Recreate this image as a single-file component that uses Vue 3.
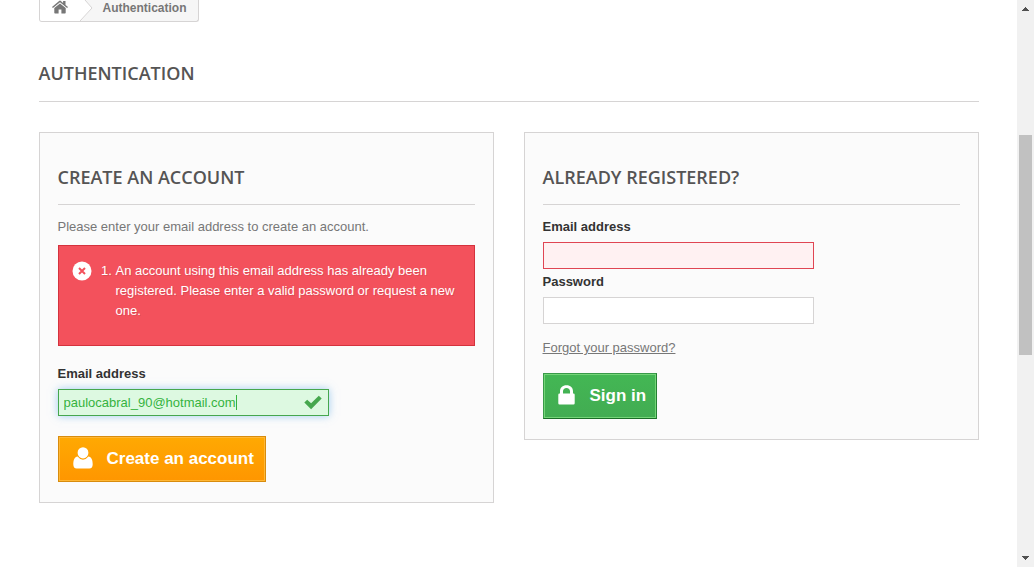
<script setup>
import { ref } from 'vue'

const newEmail = ref('paulocabral_90@hotmail.com')
const loginEmail = ref('')
const password = ref('')
const errors = [
  'An account using this email address has already been registered. Please enter a valid password or request a new one.',
]
const scroll = { start: 118, size: 220, track: 533 }
const thumbStyle = {
  top: `${(scroll.start / scroll.track) * 100}%`,
  height: `${(scroll.size / scroll.track) * 100}%`,
}
</script>

<template>
  <div class="viewport">
    <div class="page">
      <div class="container">
        <nav class="breadcrumb" aria-label="Breadcrumb">
          <a class="home" href="#" aria-label="Home">
            <svg width="16" height="14" viewBox="0 0 16 14">
              <path d="M8 3.4 2.300 8V12.700Q2.300 13.400 3 13.400H6.600V9.600H9.400V13.400H13Q13.700 13.400 13.700 12.700V8Z" />
              <path d="M0 7 7.100 .9Q8 .3 8.900 .9L11.100 2.900V1.100H13.500V5L16 7 15.100 8.100 8 2.300 .9 8.100Z" />
            </svg>
          </a>
          <svg class="divider" width="13" height="22" viewBox="0 0 13 22">
            <path class="fill" d="M0 0V22L12 8 5 0Z" />
            <path class="line" d="M5 0 12 8 0 21" />
          </svg>
          <span class="current">Authentication</span>
        </nav>

        <h1>Authentication</h1>

        <main class="columns">
          <form class="box" @submit.prevent>
            <h2>Create an account</h2>
            <p class="intro">Please enter your email address to create an account.</p>
            <div class="alert" role="alert">
              <svg width="20" height="20" viewBox="0 0 20 20">
                <circle cx="10" cy="10" r="9.500" fill="#fff" />
                <path d="m7 7 6 6m0-6-6 6" stroke="#f3515c" stroke-width="2" />
              </svg>
              <ol>
                <li v-for="error in errors" :key="error">{{ error }}</li>
              </ol>
            </div>
            <div class="field">
              <label for="email-create">Email address</label>
              <div class="control">
                <input id="email-create" v-model="newEmail" class="valid" type="text" />
                <span class="caret"></span>
                <svg class="check" width="18" height="15" viewBox="0 0 18 15">
                  <path d="M.3 7.600 3.200 4.700 7.100 8.300 14.800 .7 17.700 3.600 7.100 14.200Z" />
                </svg>
              </div>
            </div>
            <button class="create" type="submit">
              <svg width="20" height="22" viewBox="0 0 20 22">
                <ellipse cx="10" cy="5.800" rx="5.400" ry="5.600" />
                <path d="M4.600 9.500Q7 12.700 10 12.700T15.400 9.500C18.500 9.800 19.700 13 19.700 17.300Q19.700 21.500 16.300 21.500H3.700Q.3 21.500.3 17.300C.3 13 1.500 9.800 4.600 9.500Z" />
              </svg>
              <span>Create an account</span>
            </button>
          </form>

          <form class="box" @submit.prevent>
            <h2>Already registered?</h2>
            <div class="field">
              <label for="email">Email address</label>
              <div class="control">
                <input id="email" v-model="loginEmail" class="invalid" type="text" />
              </div>
            </div>
            <div class="field">
              <label for="password">Password</label>
              <div class="control">
                <input id="password" v-model="password" type="password" />
              </div>
            </div>
            <p class="forgot"><a href="#">Forgot your password?</a></p>
            <button class="signin" type="submit">
              <svg width="17" height="20" viewBox="0 0 17 20">
                <path fill-rule="evenodd" d="M2 8.500V6.300C2 2.700 4.500.3 8.500.3S15 2.700 15 6.300V8.500H15.500Q16.700 8.500 16.700 9.700V18.200Q16.700 19.400 15.500 19.400H1.500Q.3 19.400.3 18.200V9.700Q.3 8.500 1.500 8.500ZM5 8.500H12V6.300C12 4.300 10.600 3 8.500 3S5 4.300 5 6.300Z" />
              </svg>
              <span>Sign in</span>
            </button>
          </form>
        </main>
      </div>
    </div>

    <div class="scrollbar" aria-hidden="true">
      <svg class="arrow" width="17" height="17" viewBox="0 0 17 17" shape-rendering="crispEdges">
        <path d="M5 11V10H6V9H7V8H8V7H9V8H10V9H11V10H12V11Z" />
      </svg>
      <div class="track"><div class="thumb" :style="thumbStyle"></div></div>
      <svg class="arrow" width="17" height="17" viewBox="0 0 17 17" shape-rendering="crispEdges">
        <path d="M5 6V7H6V8H7V9H8V10H9V9H10V8H11V7H12V6Z" />
      </svg>
    </div>
  </div>
</template>

<style>
body {
  margin: 0;
  background: #fff;
}
</style>

<style scoped>
* {
  box-sizing: border-box;
}
.viewport {
  display: flex;
  min-height: 100vh;
  font: 13px/20px "Liberation Sans", Arial, sans-serif;
  color: #777;
}
.page {
  flex: 1;
  min-width: 0;
  padding: 0 15px;
}
.container {
  max-width: 940px;
  margin: 0 auto;
}
.breadcrumb {
  display: inline-flex;
  height: 22px;
  border: 1px solid #d6d4d4;
  border-top: 0;
  border-radius: 0 0 3px 3px;
  background: #f6f6f6;
  overflow: hidden;
  font-size: 12px;
  font-weight: bold;
  line-height: 16px;
  vertical-align: top;
}
.home {
  width: 40px;
  padding-left: 12px;
  background: #fff;
  fill: #777;
}
.home svg {
  display: block;
}
.divider .fill {
  fill: #fff;
}
.divider .line {
  fill: none;
  stroke: #d6d4d4;
}
.current {
  padding: 0 11px 0 10px;
}
h1,
h2 {
  margin: 0;
  border-bottom: 1px solid #d6d4d4;
  color: #555454;
  font: 600 18px/22px "Open Sans", sans-serif;
  text-transform: uppercase;
}
h1 {
  margin: 40px 0 30px;
  padding-bottom: 17px;
}
h2 {
  margin-bottom: 12px;
  padding-bottom: 16px;
}
.columns {
  display: grid;
  grid-template-columns: 1fr 1fr;
  align-items: start;
  gap: 30px;
}
.box {
  padding: 33px 18px 20px;
  border: 1px solid #d6d4d4;
  background: #fbfbfb;
}
.intro {
  margin: 0 0 8px;
}
.alert {
  display: flex;
  gap: 10px;
  margin-bottom: 18px;
  padding: 15px 14px 24px 13px;
  border: 1px solid #d4323d;
  background: #f3515c;
  color: #fff;
  text-shadow: 1px 1px rgba(0, 0, 0, 0.1);
}
.alert svg {
  flex: none;
}
.alert ol {
  margin: 0;
  padding-left: 14px;
}
.field {
  margin-bottom: 3px;
}
label {
  display: block;
  margin-bottom: 5px;
  color: #333;
  font-weight: bold;
}
.control {
  position: relative;
  max-width: 271px;
}
input {
  display: block;
  width: 100%;
  height: 27px;
  padding: 3px 5px;
  border: 1px solid #d6d4d4;
  border-radius: 0;
  outline: 0;
  background: #fff;
  color: #9c9b9b;
  font: inherit;
}
.valid {
  border-color: #46a74e;
  background: #ddf9e1;
  box-shadow: 0 0 8px rgba(102, 175, 233, 0.6);
  color: #35b33f;
}
.invalid {
  border-color: #e04553;
  background: #fff1f2;
}
.caret {
  position: absolute;
  top: 6px;
  left: 178px;
  width: 1px;
  height: 15px;
  background: #35b33f;
}
.check {
  position: absolute;
  top: 6px;
  right: 7px;
  fill: #46a74e;
}
.forgot {
  margin: 14px 0 15px;
}
.forgot a {
  color: #777;
}
button {
  display: flex;
  align-items: center;
  height: 46px;
  border: 1px solid;
  border-radius: 0;
  color: #fff;
  font: bold 17px/21px "Liberation Sans", Arial, sans-serif;
}
button svg {
  fill: #fff;
}
.create {
  gap: 14px;
  margin-top: 20px;
  padding: 0 11px 2px 14px;
  border-color: #d88c0d;
  background: linear-gradient(#ffa902, #ff9600);
  box-shadow: inset 0 0 0 1px #ffb735;
}
.signin {
  gap: 15px;
  padding: 0 10px 2px 14px;
  border-color: #399a49 #247f32 #1a6d27 #399a49;
  background: linear-gradient(#43b754, #42ac52);
  box-shadow: inset 0 0 0 1px #74d578;
}
.scrollbar {
  display: flex;
  flex: none;
  flex-direction: column;
  width: 17px;
  background: #f1f1f1;
}
.arrow {
  fill: #505050;
}
.track {
  position: relative;
  flex: 1;
}
.thumb {
  position: absolute;
  right: 2px;
  left: 2px;
  background: #c1c1c1;
}
</style>
